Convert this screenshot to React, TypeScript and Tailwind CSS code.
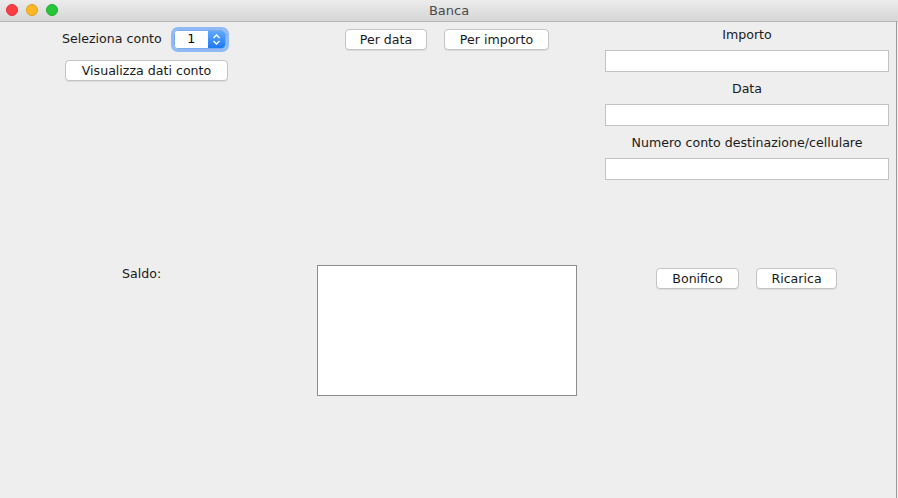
import React from 'react';

const font = { fontFamily: '"DejaVu Sans", "Lucida Grande", sans-serif' };

function MacButton({ label, width }: { label: string; width: string }) {
  return (
    <button
      className={`${width} h-[21px] bg-white border border-[#c4c4c4] rounded-[4px] shadow-[0_1px_0_rgba(0,0,0,0.08)] text-[12.6px] text-[#1a1a1a] leading-none flex items-center justify-center pt-[1px]`}
    >
      {label}
    </button>
  );
}

function Field() {
  return <div className="w-[284px] h-[22px] bg-white border border-[#c2c2c2]" />;
}

export default function App() {
  return (
    <div className="w-[898px] h-[498px] bg-[#eeeeee] overflow-hidden flex flex-col" style={font}>
      {/* title bar */}
      <div className="relative h-[22px] flex items-center justify-center bg-gradient-to-b from-[#ececec] to-[#d6d6d6] border-b border-[#b5b5b5]">
        <div className="absolute left-[6px] top-[4px] flex gap-[8px]">
          <span className="w-[12px] h-[12px] rounded-full bg-[#fc3d44] border border-[#e0333a]" />
          <span className="w-[12px] h-[12px] rounded-full bg-[#fdb624] border border-[#e0a020]" />
          <span className="w-[12px] h-[12px] rounded-full bg-[#27c63a] border border-[#1eac2f]" />
        </div>
        <span className="text-[13px] text-[#4a4a4a]">Banca</span>
      </div>

      <div className="flex-1 flex flex-col border-r border-[#9a9a9a] w-[897px]">
        {/* top section */}
        <div className="h-[243px] flex">
          <div className="w-[300px] pt-[5px] pl-[62px] flex flex-col">
            <div className="flex items-center h-[24px]">
              <span className="text-[12.6px] text-[#1a1a1a] pt-[1px]">Seleziona conto</span>
              <div className="ml-[12px] flex w-[52px] h-[19px] rounded-[4px] ring-[3px] ring-[#8fbaf5] overflow-hidden border border-[#7aa9ee]">
                <div className="flex-1 bg-white flex items-center justify-center text-[12.6px] text-black">1</div>
                <div className="w-[17px] bg-gradient-to-b from-[#5fa8ff] to-[#1a79f5] flex items-center justify-center">
                  <svg width="9" height="13" viewBox="0 0 9 13" fill="none" stroke="white" strokeWidth="1.4">
                    <path d="M1.5 5 L4.5 2 L7.5 5" />
                    <path d="M1.5 8 L4.5 11 L7.5 8" />
                  </svg>
                </div>
              </div>
            </div>
            <div className="mt-[9px] ml-[3px]">
              <MacButton label="Visualizza dati conto" width="w-[163px]" />
            </div>
          </div>

          <div className="w-[305px] pt-[7px] pl-[45px] flex gap-[17px] items-start">
            <MacButton label="Per data" width="w-[82px]" />
            <MacButton label="Per importo" width="w-[105px]" />
          </div>

          <div className="w-[284px] pt-[5px] flex flex-col items-center text-[12.6px] text-[#1a1a1a]">
            <div className="h-[16px] leading-[16px] mb-[7px]">Importo</div>
            <Field />
            <div className="h-[16px] leading-[16px] mt-[9px] mb-[7px]">Data</div>
            <Field />
            <div className="h-[16px] leading-[16px] mt-[9px] mb-[7px]">Numero conto destinazione/cellulare</div>
            <Field />
          </div>
        </div>

        {/* bottom section */}
        <div className="flex">
          <div className="w-[317px] pl-[122px] pt-[1px] text-[12.6px] text-[#1a1a1a] leading-[16px]">Saldo:</div>
          <div className="w-[260px] h-[131px] bg-white border border-[#8c8c8c]" />
          <div className="pl-[79px] pt-[3px] flex gap-[17px] items-start">
            <MacButton label="Bonifico" width="w-[83px]" />
            <MacButton label="Ricarica" width="w-[81px]" />
          </div>
        </div>
      </div>
    </div>
  );
}
